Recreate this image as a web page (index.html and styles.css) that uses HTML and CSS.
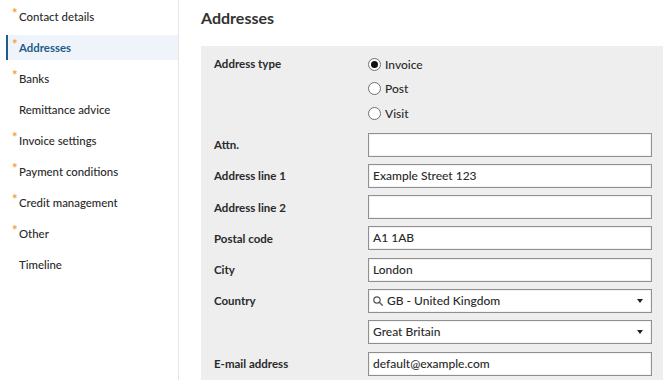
FILE: index.html
```
<!DOCTYPE html>
<html lang="en">
<head>
<meta charset="utf-8">
<title>Addresses</title>
<link rel="stylesheet" href="styles.css">
</head>
<body>
<nav class="sidebar">
  <a class="nav-item req">Contact details</a>
  <a class="nav-item req active">Addresses</a>
  <a class="nav-item req">Banks</a>
  <a class="nav-item">Remittance advice</a>
  <a class="nav-item req">Invoice settings</a>
  <a class="nav-item req">Payment conditions</a>
  <a class="nav-item req">Credit management</a>
  <a class="nav-item req">Other</a>
  <a class="nav-item">Timeline</a>
</nav>
<main class="main">
  <h1 class="title">Addresses</h1>
  <section class="panel">
    <div class="row row-radio">
      <div class="label">Address type</div>
      <div class="radios">
        <label class="radio checked"><span class="dot"></span>Invoice</label>
        <label class="radio"><span class="dot"></span>Post</label>
        <label class="radio"><span class="dot"></span>Visit</label>
      </div>
    </div>
    <div class="fields">
      <div class="label">Attn.</div>
      <div class="field"></div>
      <div class="label">Address line 1</div>
      <div class="field">Example Street 123</div>
      <div class="label">Address line 2</div>
      <div class="field"></div>
      <div class="label">Postal code</div>
      <div class="field">A1 1AB</div>
      <div class="label">City</div>
      <div class="field">London</div>
      <div class="label">Country</div>
      <div class="field select">
        <svg class="search" width="10" height="10" viewBox="0 0 10 10"><circle cx="4" cy="4" r="3.2" fill="none" stroke="#555" stroke-width="1.2"/><line x1="6.3" y1="6.3" x2="9.3" y2="9.3" stroke="#555" stroke-width="1.3" stroke-linecap="round"/></svg>
        <span class="grow">GB - United Kingdom</span><span class="caret"></span>
      </div>
      <div class="label"></div>
      <div class="field select"><span class="grow">Great Britain</span><span class="caret"></span></div>
      <div class="label">E-mail address</div>
      <div class="field">default@example.com</div>
    </div>
  </section>
</main>
</body>
</html>
```
FILE: styles.css
```
* { box-sizing: border-box; }
html, body { height: 100%; }
body {
  margin: 0;
  display: flex;
  font-family: Lato, "Noto Sans", sans-serif;
  font-size: 12px;
  color: #2a2a2a;
  background: #fff;
  overflow: hidden;
}
.sidebar {
  width: 179px;
  flex: none;
  border-right: 1px solid #e6e6e6;
  padding-top: 4px;
  display: flex;
  flex-direction: column;
  gap: 6px;
}
.nav-item {
  position: relative;
  display: block;
  height: 25px;
  line-height: 25px;
  margin-left: 6px;
  padding-left: 11px;
  border-left: 2px solid transparent;
  color: #2a2a2a;
  font-size: 11.4px;
  font-weight: 500;
}
.nav-item.req::before {
  content: "*";
  position: absolute;
  left: 4px;
  top: -3px;
  color: #f0a23c;
  font-size: 13px;
  font-weight: 700;
}
.nav-item.active {
  background: #eef4fa;
  border-left-color: #1f5c8a;
  color: #1f5c8a;
  font-weight: 700;
}
.main {
  flex: 1;
  padding-left: 22px;
}
.title {
  margin: 7px 0 0;
  font-size: 16px;
  font-weight: 700;
  line-height: 22px;
  color: #333;
}
.panel {
  margin-top: 17px;
  width: 462px;
  min-height: 400px;
  background: #eeeeee;
  padding: 8px 11px 10px 13px;
}
.row-radio {
  display: grid;
  grid-template-columns: 154px 1fr;
}
.row-radio .label { line-height: 20px; }
.label {
  font-weight: 700;
  font-size: 11.5px;
}
.radios {
  display: flex;
  flex-direction: column;
  gap: 4.5px;
}
.radio {
  display: flex;
  align-items: center;
  height: 20px;
  gap: 4px;
  font-weight: 500;
}
.dot {
  width: 13px;
  height: 13px;
  border-radius: 50%;
  border: 1px solid #707070;
  background: #fff;
  display: flex;
  align-items: center;
  justify-content: center;
}
.radio.checked .dot::after {
  content: "";
  width: 7px;
  height: 7px;
  border-radius: 50%;
  background: #111;
}
.fields {
  margin-top: 9.5px;
  display: grid;
  grid-template-columns: 154px 1fr;
  grid-auto-rows: 24px;
  row-gap: 7.3px;
  align-items: center;
}
.field {
  height: 24px;
  border: 1px solid #909090;
  box-shadow: inset 0 0 0 1px #f2f2f2;
  background: #fff;
  padding: 0 4px;
  line-height: 22px;
  display: flex;
  align-items: center;
  color: #2a2a2a;
  font-weight: 500;
}
.select { padding-right: 8px; }
.search { margin-right: 4px; flex: none; }
.grow { flex: 1; }
.caret {
  width: 0;
  height: 0;
  border-left: 3.5px solid transparent;
  border-right: 3.5px solid transparent;
  border-top: 4px solid #222;
}
```
